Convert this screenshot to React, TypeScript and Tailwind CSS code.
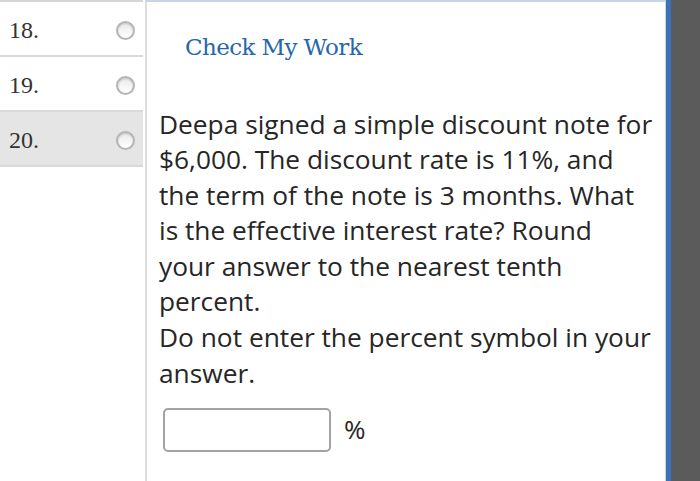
import React from 'react';

const questions = [
  { num: '18.', active: false },
  { num: '19.', active: false },
  { num: '20.', active: true },
];

function Radio() {
  return (
    <span className="block w-[19px] h-[19px] rounded-full border-2 border-[#b5b5b5] bg-gradient-to-b from-[#e9e9e9] to-white shadow-[inset_0_1px_2px_rgba(0,0,0,0.15)]" />
  );
}

export default function App() {
  return (
    <div className="flex w-[700px] h-[481px] overflow-hidden bg-white">
      {/* Question list */}
      <div className="w-[143px] shrink-0 border-t-2 border-[#d6d6d6]">
        {questions.map((q) => (
          <div
            key={q.num}
            className={`flex items-center justify-between h-[55px] pl-[9px] pr-[8px] pt-[3px] border-b-2 border-[#d9d9d9] ${
              q.active ? 'bg-[#e5e5e5]' : 'bg-white'
            }`}
          >
            <span className="text-[24px] text-[#333] font-['Liberation_Serif',serif]">{q.num}</span>
            <Radio />
          </div>
        ))}
      </div>

      {/* Question panel */}
      <div className="ml-[2px] w-[521px] shrink-0 border-l-2 border-t-2 border-l-[#dcdcdc] border-t-[#c9d5e6] border-r border-r-[#c7d6ea]">
        <div className="pl-[38px] pt-[28px] text-[23px] text-[#2566ad] font-['DejaVu_Serif',serif] tracking-[-0.6px]">
          Check My Work
        </div>
        <div className="pl-[12px] pt-[42px] text-[26.3px] leading-[35.6px] text-[#262626] font-['Open_Sans',sans-serif] whitespace-nowrap">
          <p>
            Deepa signed a simple discount note for
            <br />
            $6,000. The discount rate is 11%, and
            <br />
            the term of the note is 3 months. What
            <br />
            is the effective interest rate? Round
            <br />
            your answer to the nearest tenth
            <br />
            percent.
          </p>
          <p>
            Do not enter the percent symbol in your
            <br />
            answer.
          </p>
          <div className="flex items-center gap-[13px] mt-[17px] ml-[4px]">
            <input
              type="text"
              className="w-[168px] h-[44px] rounded-[5px] border-2 border-[#a3a3a3] bg-white"
            />
            <span className="text-[26px] text-[#262626]">%</span>
          </div>
        </div>
      </div>

      <div className="w-[5px] shrink-0 bg-[#3b72b5]" />
      <div className="flex-1 bg-[#5b5b5b]" />
    </div>
  );
}
